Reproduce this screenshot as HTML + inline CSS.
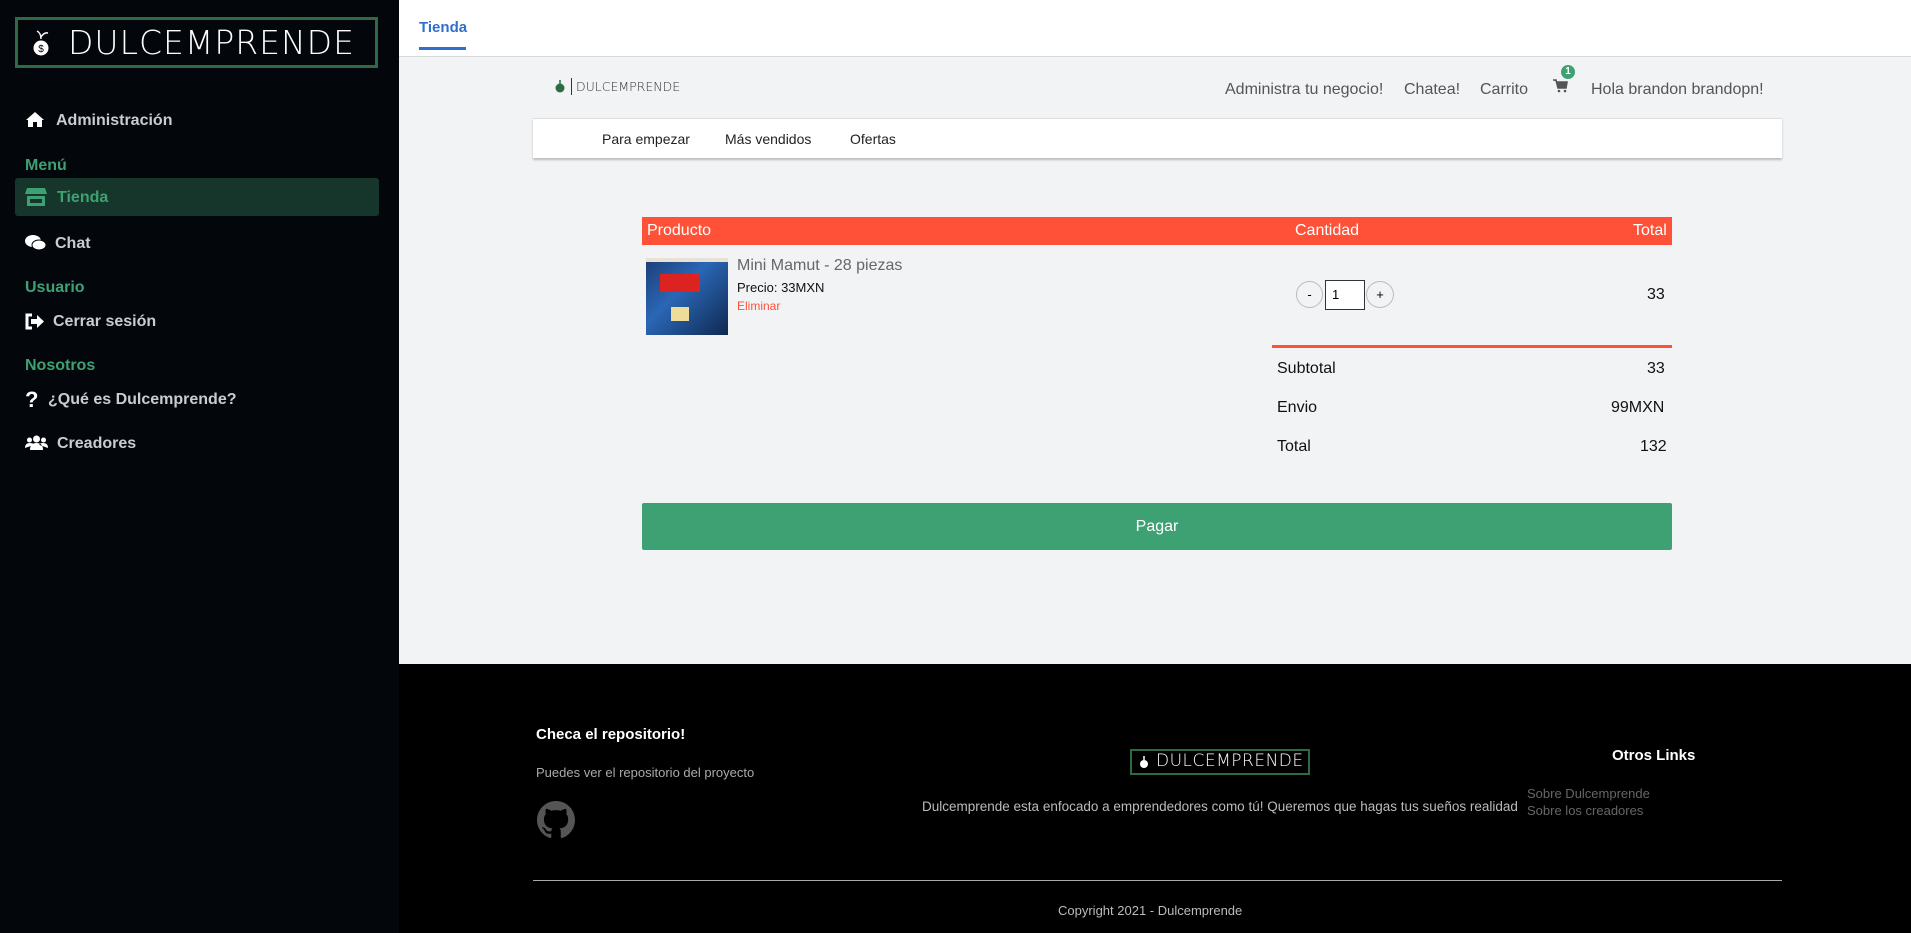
<!DOCTYPE html>
<html><head><meta charset="utf-8"><style>
*{box-sizing:border-box;margin:0;padding:0}
body{width:1911px;height:933px;overflow:hidden;font-family:"Liberation Sans",sans-serif;background:#f2f3f5;position:relative}
.a{position:absolute;white-space:nowrap}
#side{position:absolute;left:0;top:0;width:399px;height:933px;background:#03070c}
.si{position:absolute;left:25px;font-size:16px;font-weight:bold;color:#c9ccd2}
.sh{position:absolute;left:25px;font-size:16px;font-weight:bold;color:#3ea174}
.logo{font-family:"DejaVu Sans",sans-serif;font-weight:200;letter-spacing:1px;color:#fff}
</style></head><body>
<div id="side">
 <div class="a" style="left:15px;top:17px;width:363px;height:51px;border:3px solid #2e6b45;"></div>
 <svg class="a" style="left:31px;top:29px" width="20" height="28" viewBox="0 0 20 28"><path d="M10 10 Q10 4 6 2 M10 8 Q13 3 17 4" stroke="#fff" fill="none" stroke-width="1.5"/><circle cx="10" cy="19" r="7.5" fill="#fff"/><text x="10" y="23" font-size="10" text-anchor="middle" fill="#000" font-family="Liberation Sans">$</text></svg>
 <div class="a logo" style="left:68px;top:23px;font-size:33px;">DULCEMPRENDE</div>
 <svg class="a" style="left:25px;top:111px" width="20" height="17" viewBox="0 0 20 17"><path d="M10 1 L1 9 L3 9 L3 16 L8 16 L8 11 L12 11 L12 16 L17 16 L17 9 L19 9 Z" fill="#fff"/></svg>
 <div class="si" style="left:56px;top:112px">Administración</div>
 <div class="sh" style="top:157px">Menú</div>
 <div class="a" style="left:15px;top:178px;width:364px;height:38px;background:#17362b;border-radius:3px"></div>
 <svg class="a" style="left:25px;top:187px" width="22" height="20" viewBox="0 0 22 20"><path d="M2 1h18l2 6H0z" fill="#3ea174"/><path d="M2 9h18v10H2z M5 12v4h12v-4z" fill="#3ea174" fill-rule="evenodd"/></svg>
 <div class="si" style="left:57px;top:189px;color:#3ea174">Tienda</div>
 <svg class="a" style="left:25px;top:234px" width="21" height="18" viewBox="0 0 21 18"><ellipse cx="8" cy="7" rx="8" ry="6" fill="#fff"/><ellipse cx="14" cy="11" rx="7" ry="5" fill="#fff" stroke="#03070c" stroke-width="1"/></svg>
 <div class="si" style="left:55px;top:235px">Chat</div>
 <div class="sh" style="top:279px">Usuario</div>
 <svg class="a" style="left:25px;top:313px" width="19" height="17" viewBox="0 0 19 17"><path d="M7 2H2v13h5" stroke="#fff" stroke-width="3" fill="none"/><path d="M6 6h6V2l7 6.5-7 6.5v-4H6z" fill="#fff"/></svg>
 <div class="si" style="left:53px;top:313px">Cerrar sesión</div>
 <div class="sh" style="top:357px">Nosotros</div>
 <div class="si" style="left:25px;top:387px;font-size:22px;color:#fff">?</div>
 <div class="si" style="left:48px;top:391px">¿Qué es Dulcemprende?</div>
 <svg class="a" style="left:25px;top:435px" width="23" height="16" viewBox="0 0 23 16"><circle cx="11.5" cy="4" r="3.5" fill="#fff"/><circle cx="4.5" cy="5" r="2.5" fill="#fff"/><circle cx="18.5" cy="5" r="2.5" fill="#fff"/><path d="M5 15q0-7 6.5-7t6.5 7z M0 13q0-5 4.5-5t4 2z M23 13q0-5-4.5-5t-4 2z" fill="#fff"/></svg>
 <div class="si" style="left:57px;top:435px">Creadores</div>
</div>
<div class="a" style="left:399px;top:0;width:1512px;height:57px;background:#fff;border-bottom:1px solid #d6d8dc"></div>
<div class="a" style="left:419px;top:19px;font-size:15px;font-weight:bold;color:#2f6fd0">Tienda</div>
<div class="a" style="left:419px;top:47px;width:47px;height:3px;background:#2f6fd0"></div>

<svg class="a" style="left:555px;top:78px" width="10" height="16" viewBox="0 0 10 16"><circle cx="5" cy="10" r="4.5" fill="#2e6b45"/><path d="M5 6V2" stroke="#2e6b45" stroke-width="1.5"/></svg>
<div class="a" style="left:571px;top:78px;width:1px;height:17px;background:#333"></div>
<div class="a logo" style="left:576px;top:79px;font-size:12.5px;color:#333;letter-spacing:0">DULCEMPRENDE</div>
<div class="a" style="left:1225px;top:81px;font-size:16px;color:#555">Administra tu negocio!</div>
<div class="a" style="left:1404px;top:81px;font-size:16px;color:#555">Chatea!</div>
<div class="a" style="left:1480px;top:81px;font-size:16px;color:#555">Carrito</div>
<svg class="a" style="left:1552px;top:78px" width="16" height="16" viewBox="0 0 16 16"><path d="M1 2h3l2 8h8l1-6H5" stroke="#555" stroke-width="1.6" fill="#555"/><circle cx="7" cy="13" r="1.3" fill="#555"/><circle cx="13" cy="13" r="1.3" fill="#555"/></svg>
<div class="a" style="left:1561px;top:65px;width:14px;height:14px;border-radius:7px;background:#3ea174;color:#fff;font-size:10px;font-weight:bold;text-align:center;line-height:14px">1</div>
<div class="a" style="left:1591px;top:81px;font-size:16px;color:#555">Hola brandon brandopn!</div>

<div class="a" style="left:533px;top:118px;width:1249px;height:40px;background:#fff;border-top:1px solid #ddd;box-shadow:0 2px 2px #bbb"></div>
<div class="a" style="left:602px;top:131px;font-size:14px;color:#222">Para empezar</div>
<div class="a" style="left:725px;top:131px;font-size:14px;color:#222">Más vendidos</div>
<div class="a" style="left:850px;top:131px;font-size:14px;color:#222">Ofertas</div>

<div class="a" style="left:642px;top:217px;width:1030px;height:28px;background:#ff5138"></div>
<div class="a" style="left:647px;top:222px;font-size:16px;color:#fff">Producto</div>
<div class="a" style="left:1295px;top:222px;font-size:16px;color:#fff">Cantidad</div>
<div class="a" style="left:1633px;top:222px;font-size:16px;color:#fff">Total</div>
<div class="a" style="left:646px;top:258px;width:82px;height:77px;background:linear-gradient(135deg,#1d3f7a,#2a67b5 40%,#0f2850);border-top:4px solid #e9e2d4"><div style="position:absolute;left:14px;top:12px;width:40px;height:18px;background:#d22;"></div><div style="position:absolute;left:25px;top:45px;width:18px;height:14px;background:#eedd99"></div></div>
<div class="a" style="left:737px;top:257px;font-size:16px;color:#666">Mini Mamut - 28 piezas</div>
<div class="a" style="left:737px;top:280px;font-size:13px;color:#111">Precio: 33MXN</div>
<div class="a" style="left:737px;top:299px;font-size:12px;color:#ff5138">Eliminar</div>
<div class="a" style="left:1296px;top:281px;width:27px;height:27px;border:1px solid #bbb;border-radius:50%;text-align:center;line-height:25px;font-size:13px">-</div>
<div class="a" style="left:1325px;top:280px;width:40px;height:30px;border:1px solid #333;background:#fff;font-size:13px;padding:6px 6px">1</div>
<div class="a" style="left:1366px;top:281px;width:28px;height:27px;border:1px solid #bbb;border-radius:50%;text-align:center;line-height:25px;font-size:13px">+</div>
<div class="a" style="left:1647px;top:286px;font-size:16px;color:#111">33</div>
<div class="a" style="left:1272px;top:345px;width:400px;height:3px;background:#ff5138"></div>
<div class="a" style="left:1277px;top:360px;font-size:16px;color:#111">Subtotal</div>
<div class="a" style="left:1647px;top:360px;font-size:16px;color:#111">33</div>
<div class="a" style="left:1277px;top:399px;font-size:16px;color:#111">Envio</div>
<div class="a" style="left:1611px;top:399px;font-size:16px;color:#111">99MXN</div>
<div class="a" style="left:1277px;top:438px;font-size:16px;color:#111">Total</div>
<div class="a" style="left:1640px;top:438px;font-size:16px;color:#111">132</div>
<div class="a" style="left:642px;top:503px;width:1030px;height:47px;background:#3ea174;border-radius:2px;color:#fff;font-size:16px;text-align:center;line-height:47px">Pagar</div>

<div class="a" style="left:399px;top:664px;width:1512px;height:269px;background:#000"></div>
<div class="a" style="left:536px;top:726px;font-size:15px;font-weight:bold;color:#fff">Checa el repositorio!</div>
<div class="a" style="left:536px;top:765px;font-size:13px;color:#aaa">Puedes ver el repositorio del proyecto</div>
<svg class="a" style="left:537px;top:801px" width="38" height="38" viewBox="0 0 16 16"><path fill="#555" d="M8 0C3.58 0 0 3.580 0 8c0 3.54 2.290 6.530 5.470 7.590.4.07.55-.17.55-.38 0-.19-.01-.82-.01-1.49-2.010.37-2.530-.49-2.690-.94-.09-.23-.48-.94-.82-1.130-.28-.15-.68-.52-.01-.53.63-.01 1.080.58 1.230.82.72 1.210 1.870.87 2.330.66.07-.52.28-.87.51-1.070-1.780-.2-3.640-.89-3.640-3.950 0-.87.31-1.590.82-2.150-.08-.2-.36-1.020.08-2.120 0 0 .67-.21 2.200.82.64-.18 1.320-.27 2-.27.68 0 1.360.09 2 .27 1.530-1.040 2.200-.82 2.200-.82.44 1.100.16 1.920.08 2.120.51.56.82 1.270.82 2.150 0 3.070-1.870 3.750-3.650 3.950.29.25.54.73.54 1.480 0 1.070-.01 1.930-.01 2.200 0 .21.15.46.55.38A8.013 8.013 0 0016 8c0-4.420-3.580-8-8-8z"/></svg>
<div class="a" style="left:1130px;top:749px;width:180px;height:26px;border:2px solid #2e6b45"></div>
<svg class="a" style="left:1139px;top:754px" width="10" height="16" viewBox="0 0 10 16"><circle cx="5" cy="10" r="4" fill="#fff"/><path d="M5 6V2" stroke="#fff" stroke-width="1.5"/></svg>
<div class="a logo" style="left:1156px;top:751px;font-size:17px;letter-spacing:0.5px">DULCEMPRENDE</div>
<div class="a" style="left:922px;top:799px;font-size:13.5px;color:#bbb">Dulcemprende esta enfocado a emprendedores como tú! Queremos que hagas tus sueños realidad</div>
<div class="a" style="left:1612px;top:747px;font-size:15px;font-weight:bold;color:#fff">Otros Links</div>
<div class="a" style="left:1527px;top:786px;font-size:13px;color:#666">Sobre Dulcemprende</div>
<div class="a" style="left:1527px;top:803px;font-size:13px;color:#666">Sobre los creadores</div>
<div class="a" style="left:533px;top:880px;width:1249px;height:1px;background:#aaa"></div>
<div class="a" style="left:1058px;top:903px;font-size:13px;color:#bbb">Copyright 2021 - Dulcemprende</div>
</body></html>
